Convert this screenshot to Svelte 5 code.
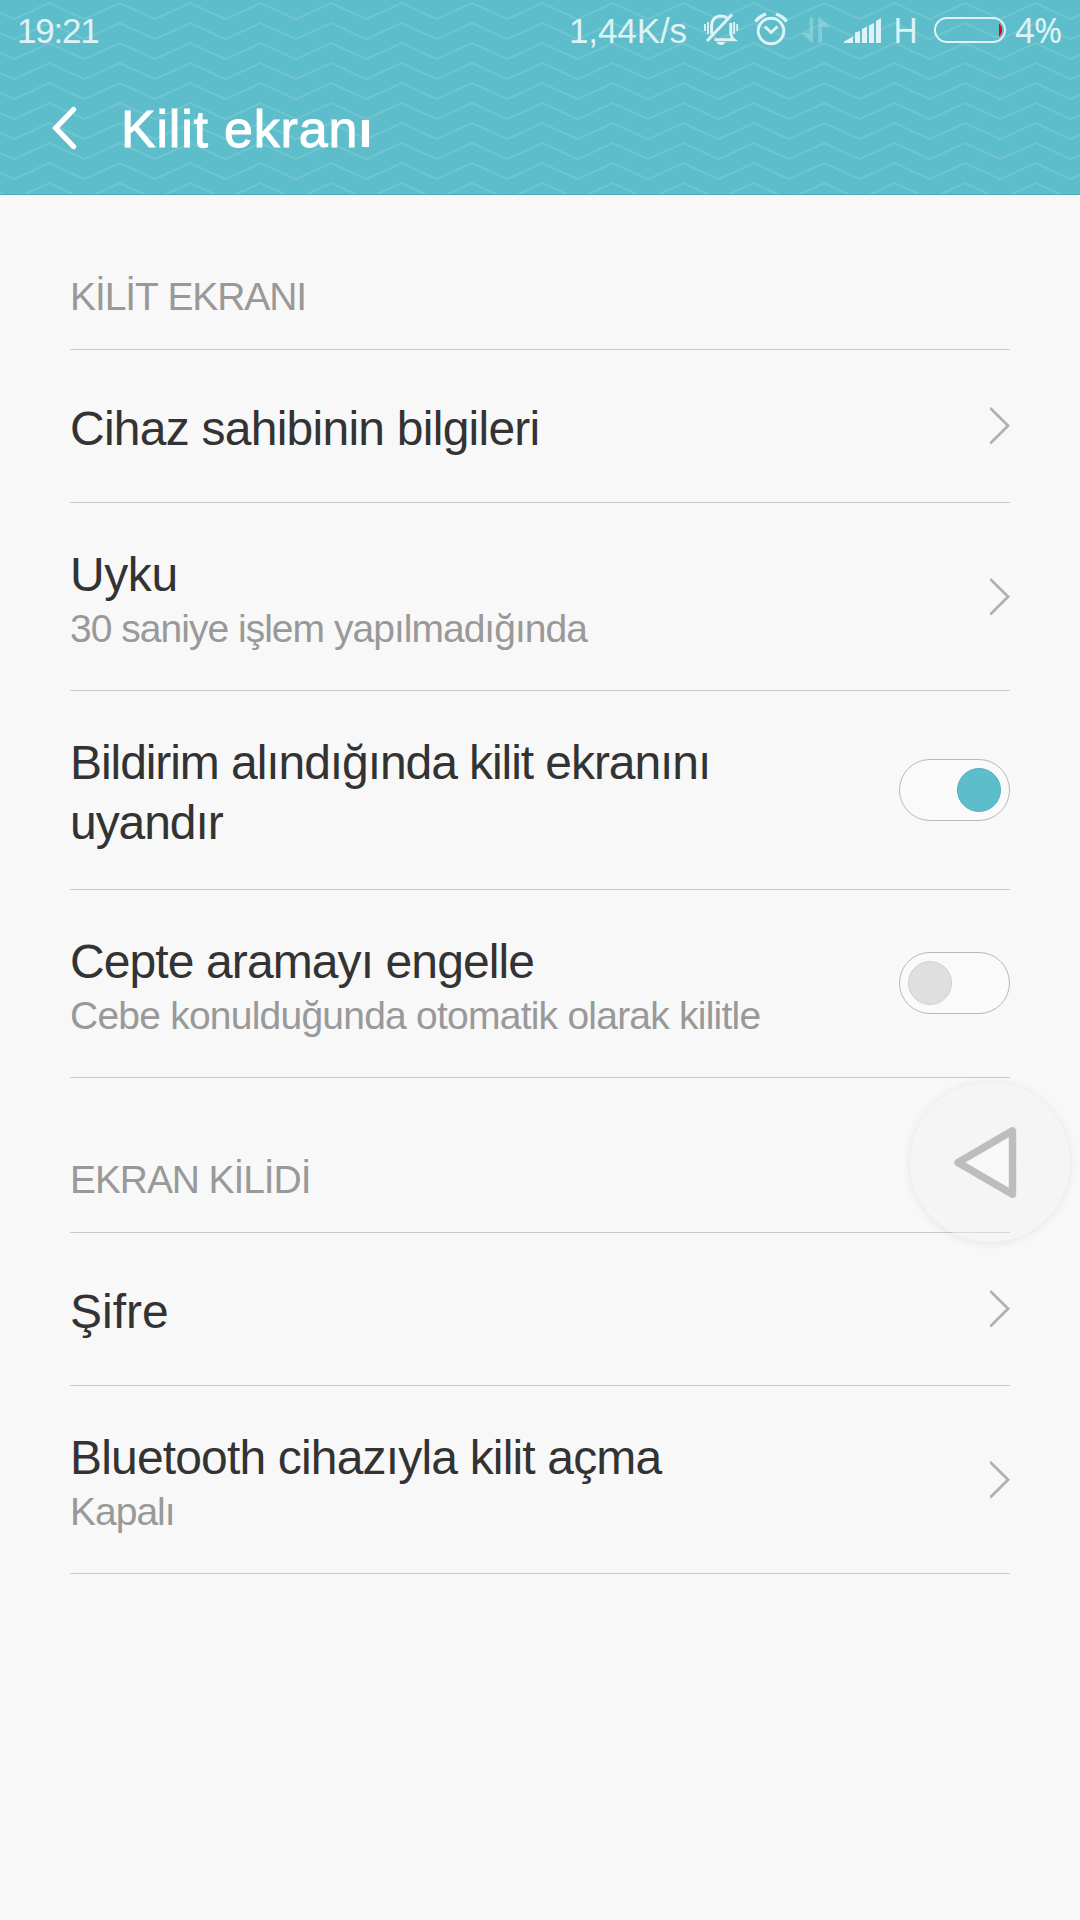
<script lang="ts">
	type Item = {
		title: string;
		tracking: number;
		summary?: string;
		summaryTracking?: number;
		checked?: boolean;
	};

	type Section = {
		label: string;
		items: Item[];
	};

	let sections = $state<Section[]>([
		{
			label: 'KİLİT EKRANI',
			items: [
				{ title: 'Cihaz sahibinin bilgileri', tracking: -0.75 },
				{
					title: 'Uyku',
					tracking: -0.4,
					summary: '30 saniye işlem yapılmadığında',
					summaryTracking: -0.98
				},
				{
					title: 'Bildirim alındığında kilit ekranını uyandır',
					tracking: -1.07,
					checked: true
				},
				{
					title: 'Cepte aramayı engelle',
					tracking: -0.9,
					summary: 'Cebe konulduğunda otomatik olarak kilitle',
					summaryTracking: -0.77,
					checked: false
				}
			]
		},
		{
			label: 'EKRAN KİLİDİ',
			items: [
				{ title: 'Şifre', tracking: 0 },
				{
					title: 'Bluetooth cihazıyla kilit açma',
					tracking: -0.83,
					summary: 'Kapalı',
					summaryTracking: -1
				}
			]
		}
	]);

	// One zigzag line across the header, repeated every 20px
	const STEP = 35.22;
	const zigzag = Array.from({ length: 34 }, (_, i) => `${(14.1 + (i - 1) * STEP).toFixed(2)} ${i % 2 ? 19.2 : 3.2}`).join(' ');
</script>

<div class="screen">
	<header class="header">
		<svg class="waves" width="1080" height="194" aria-hidden="true">
			{#each { length: 10 } as _, i}
				<polyline points={zigzag} transform="translate(0 {i * 20})" />
			{/each}
		</svg>

		<div class="status-bar">
			<span class="clock">19:21</span>
			<span class="speed">1,44K/s</span>
			<svg class="bell" width="36" height="34" viewBox="0 0 36 34" fill="none" stroke="currentColor" stroke-width="3">
				<path d="M7.600 21V13.500C7.600 6.500 11.500 3 17.200 3c2.600 0 4.600.8 6.300 2.300M26.800 10V19c0 4 1 6 3.200 7.800H10.500" />
				<path d="M28 1.500 3 28" />
				<path d="M12.500 29h9c-.8 2-2.500 3-4.500 3s-3.700-1-4.500-3z" fill="currentColor" stroke="none" />
				<path d="M1 11v7M4 9v12M30.200 9v12M33.200 11v7" stroke-width="1.800" />
			</svg>
			<svg class="alarm" width="34" height="34" viewBox="0 0 34 34" fill="none" stroke="currentColor" stroke-width="2.900">
				<circle cx="17" cy="19" r="12.800" />
				<path d="M11 14.500 17 20.500 23.500 14.500" stroke-width="3" />
				<path d="M1.500 9.500Q5 4.500 12 2M32.500 9.500Q29 4.500 22 2" stroke-width="3.400" />
			</svg>
			<svg class="data" width="28" height="26" viewBox="0 0 28 26" fill="currentColor">
				<path d="M7.500 1.500Q7.500 0 9.300 0T11 1.500V26H10L0 16.500V16H7.500z" />
				<path d="M16.300 0h1L27.500 9.500V10H20V24.500Q20 26 18.200 26T16.300 24.500z" />
			</svg>
			<svg class="signal" width="37" height="25" viewBox="0 0 37 25" fill="currentColor">
				<path d="M0 25v-1.500L9 18.500V25zM11 25V14.500L16 13v12zM18 25V11l5-2.500V25zM25 25V7.500L30 5v20zM32 25V3l5-3v25z" />
			</svg>
			<span class="network">H</span>
			<svg class="battery" width="72" height="26" viewBox="0 0 72 26" fill="none">
				<rect x="1" y="1" width="70" height="24" rx="12" stroke="currentColor" stroke-width="2" />
				<path d="M65 6.500Q68 9 68 13T65 19.500z" fill="#f00000" />
			</svg>
			<span class="percent">4%</span>
		</div>

		<div class="title-bar">
			<button type="button" class="back" aria-label="Geri">
				<svg width="26" height="44" viewBox="0 0 26 44" fill="none" stroke="currentColor" stroke-width="5.400" stroke-linecap="round" stroke-linejoin="miter">
					<path d="M22.500 3.500 4.800 22 22.500 40.500" />
				</svg>
			</button>
			<h1>Kilit ekran<span class="dotless">ı</span></h1>
		</div>
	</header>

	<main>
		{#each sections as section}
			<section>
				<h2>{section.label}</h2>
				{#each section.items as item}
					<div class="row" class:wrap={item.title.length > 36}>
						<div class="text">
							<div class="title" style:letter-spacing="{item.tracking}px">{item.title}</div>
							{#if item.summary}
								<div class="summary" style:letter-spacing="{item.summaryTracking}px">{item.summary}</div>
							{/if}
						</div>
						{#if item.checked !== undefined}
							<button
								type="button"
								class="toggle"
								class:on={item.checked}
								role="switch"
								aria-checked={item.checked}
								aria-label={item.title}
								onclick={() => (item.checked = !item.checked)}
							>
								<span class="knob"></span>
							</button>
						{:else}
							<svg class="chevron" width="20" height="38" viewBox="0 0 20 38" fill="none" stroke="#b0b0b0" stroke-width="2.700" stroke-linecap="round">
								<path d="M.9 1.700 18.100 18.700 .9 35.700" />
							</svg>
						{/if}
					</div>
				{/each}
			</section>
		{/each}
	</main>

	<button type="button" class="float-back" aria-label="Geri dön">
		<svg width="160" height="160" viewBox="0 0 160 160" stroke-linejoin="round">
			<path d="M48 80.500 102.500 48.800V112.200z" fill="#f8f8f8" stroke="#bdbdbd" stroke-width="7.400" />
		</svg>
	</button>
</div>

<style>
	:global(body) {
		background: #f8f8f8;
	}

	.screen {
		position: relative;
		width: 1080px;
		height: 1920px;
		overflow: hidden;
		background: #f8f8f8;
		color: #333;
		font-family: 'Liberation Sans', Arial, sans-serif;
		font-kerning: none;
	}

	button {
		padding: 0;
		border: none;
		background: none;
		color: inherit;
		cursor: pointer;
	}

	svg {
		display: block;
		flex: none;
	}

	.header {
		position: relative;
		box-sizing: border-box;
		height: 195px;
		border-bottom: 1px solid #4cabb7;
		background: #5dbdca;
		color: #fff;
	}

	.waves {
		position: absolute;
		top: 0;
		left: 0;
	}

	.waves polyline {
		fill: none;
		stroke: rgba(255, 255, 255, 0.12);
		stroke-width: 2;
	}

	.status-bar {
		position: relative;
		display: flex;
		align-items: flex-start;
		height: 62px;
		color: #dff2f5;
		font-size: 35px;
		line-height: 62px;
		white-space: nowrap;
	}

	.clock {
		width: 552px;
		padding-left: 17px;
		letter-spacing: -1.2px;
	}

	.speed {
		width: 135px;
		letter-spacing: -0.1px;
	}

	.bell {
		margin-top: 13px;
	}

	.alarm {
		margin: 12px 0 0 14px;
	}

	.data {
		margin: 17px 0 0 14px;
		opacity: 0.3;
	}

	.signal {
		margin: 18px 0 0 14px;
	}

	.network,
	.percent {
		font-family: 'Noto Sans', 'Liberation Sans', sans-serif;
		font-size: 34px;
		line-height: 60px;
	}

	.network {
		width: 41px;
		padding-left: 12px;
	}

	.battery {
		margin-top: 17px;
	}

	.percent {
		margin-left: 9px;
		letter-spacing: -0.5px;
	}

	.title-bar {
		position: relative;
		display: flex;
		align-items: center;
		height: 132px;
		padding-left: 51px;
	}

	.back {
		margin-right: 44px;
	}

	h1 {
		margin: 2px 0 0;
		font-size: 52px;
		font-weight: 400;
		line-height: 60px;
		letter-spacing: 0.8px;
		-webkit-text-stroke: 1px #fff;
	}

	.dotless {
		font-weight: 700;
		-webkit-text-stroke: 0;
	}

	main {
		padding: 0 70px;
	}

	h2 {
		box-sizing: border-box;
		height: 155px;
		margin: 0;
		padding-top: 77px;
		border-bottom: 1px solid #cacaca;
		color: #999;
		font-size: 39px;
		font-weight: 400;
		line-height: 49px;
		letter-spacing: -1.1px;
	}

	.row {
		display: flex;
		align-items: center;
		justify-content: space-between;
		box-sizing: border-box;
		height: 153px;
		border-bottom: 1px solid #cacaca;
	}

	.row:has(.summary) {
		height: 188px;
	}

	.row.wrap {
		height: 199px;
	}

	.text {
		max-width: 720px;
		padding-top: 5px;
	}

	.title {
		font-size: 48px;
		line-height: 60px;
	}

	.summary {
		color: #999;
		font-size: 39px;
		line-height: 48px;
	}

	.toggle {
		display: flex;
		align-items: center;
		flex: none;
		box-sizing: border-box;
		width: 111px;
		height: 62px;
		margin-bottom: 1px;
		padding: 0 8px;
		border: 1px solid #b8b8b8;
		border-radius: 31px;
		background: #fafafa;
	}

	.toggle.on {
		justify-content: flex-end;
		margin-bottom: 0;
	}

	.knob {
		box-sizing: border-box;
		width: 44px;
		height: 44px;
		border: 1px solid #d0d0d0;
		border-radius: 50%;
		background: #dfdfdf;
	}

	.on .knob {
		border-color: #53b0bc;
		background: #5dbdca;
	}

	.float-back {
		position: absolute;
		top: 1082px;
		left: 910px;
		width: 160px;
		height: 160px;
		border-radius: 50%;
		background: rgba(240, 240, 240, 0.4);
		box-shadow: 0 1px 8px 1px rgba(0, 0, 0, 0.07);
	}
</style>
